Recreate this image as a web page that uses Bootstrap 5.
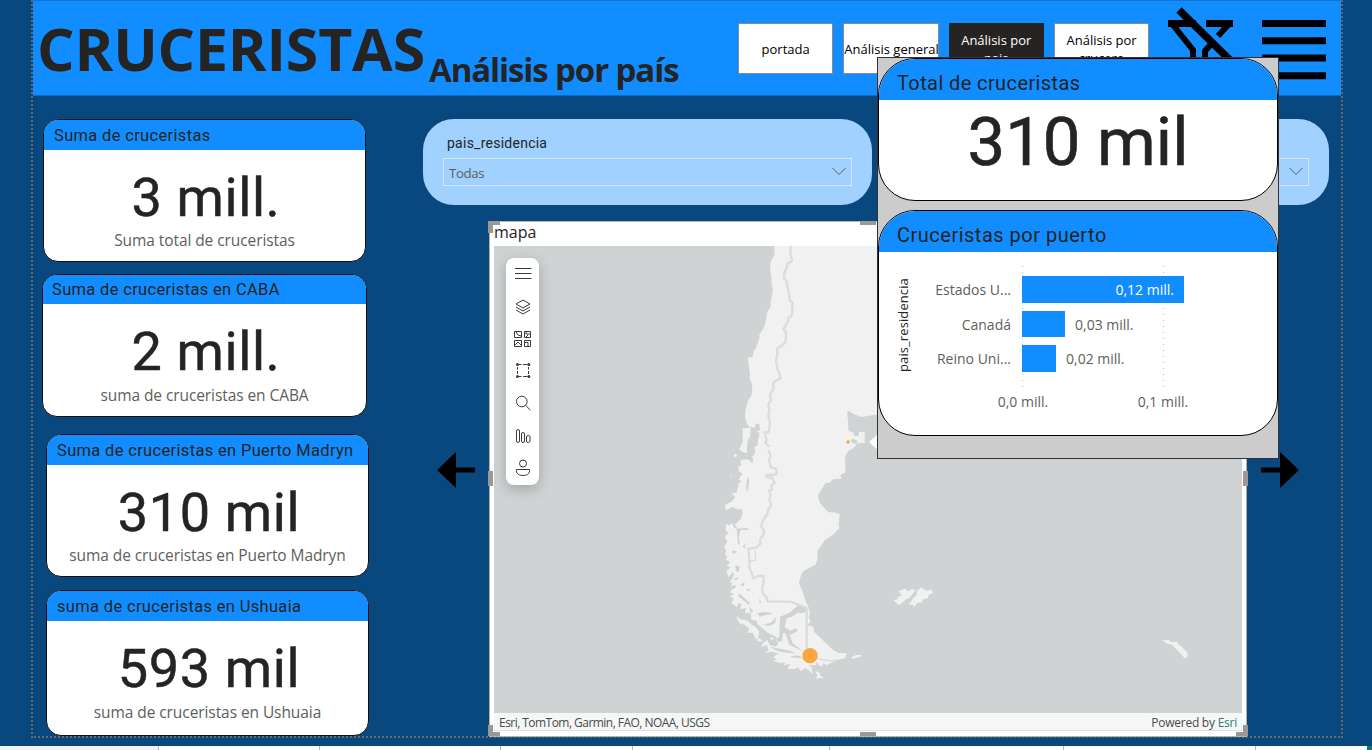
<!DOCTYPE html>
<html lang="es">
<head>
<meta charset="utf-8">
<meta name="viewport" content="width=device-width, initial-scale=1">
<title>Cruceristas - Análisis por país</title>
<link href="https://cdn.jsdelivr.net/npm/bootstrap@5.3.0/dist/css/bootstrap.min.css" rel="stylesheet">
<style>
body{width:1372px;height:750px;overflow:hidden;background:#09477f;font-family:"Open Sans","Noto Sans",sans-serif;color:#252423}
.din{font-family:Roboto,"Open Sans",sans-serif}
.stage{height:746px}
.report{width:1312px;height:738px;margin-left:31px;border:2px dotted #6a6664;border-top:0}
.topbar{height:96px;background:#118dff;border-top:1px solid #1173cf;border-bottom:1px solid #0d6ac0;padding-left:4px}
.h-main{width:392px;font-size:59px;font-weight:700;line-height:60px;margin-top:17px;letter-spacing:-.2px;white-space:nowrap}
.h-sub{width:250px;font-size:33px;font-weight:700;line-height:40px;margin-top:49px;letter-spacing:-1.1px;white-space:nowrap}
.navbtns{margin:22px 0 0 59px;gap:10px}
.pagebtn{width:95.3px;height:51px;background:#fff;border:1px solid #8a8a8a;border-radius:0;color:#000;font-size:13px;line-height:17.5px;padding:2px 0 0;overflow:hidden;white-space:nowrap}
.pagebtn.on{background:#252423;color:#fff;border-color:#252423}
.leftcol{width:390px}
.kpi{width:323px;height:143px;border:1px solid #111;border-radius:15px;overflow:hidden;background:#fff;text-align:center}
.kpi-h{background:#118dff;height:30px;padding-left:10px;font-size:16.5px;line-height:31px;letter-spacing:.33px;text-align:left}
.kpi-v{font-size:54px;line-height:60px;margin-top:18px;letter-spacing:.6px;padding-left:3px;-webkit-text-stroke:.5px #252423}
.kpi-l{font-size:15.5px;line-height:22px;color:#605e5c;letter-spacing:-.08px;margin-top:1px}
.c1{margin:23px 0 0 10px}
.c2{width:325px;margin:12px 0 0 9px}
.c2 .kpi-h{height:29px;line-height:29px;padding-left:9px}
.c2 .kpi-l,.c4 .kpi-l{margin-top:2px}
.c3{margin:17px 0 0 13px}
.c4{height:146px;margin:13px 0 0 13px}
.slicer{width:449px;height:86.6px;border-radius:31px;background:#a0d1ff;padding:14.300px 20px 0}
.sl-t{font-size:14px;line-height:20px;padding-left:4px;letter-spacing:.25px}
.sl-box{height:28px;margin-top:5px;border:1px solid #d5e6f6;padding:0 5px;font-size:13.3px;color:#605e5c;letter-spacing:-.4px}
.sl-box span{padding-top:4px}
.arrow-l{margin:0 14px}
.arrow-r{margin-left:14px}
.mapcard{width:758px;height:516px;background:#fff;border:1px solid #b3b0ad;padding:0 4px}
.map-t{height:24px;font-size:16px;line-height:21px}
.mapfoot{height:18px;background:#f5f7f6;border:1px solid #e0e2e2;border-width:0 0 1px;font-size:12px;line-height:20px;padding:0 5px;color:#4a4a4a}
.attr{letter-spacing:-.54px}
.pow{letter-spacing:-.24px}
.pow span{color:#2b7f73}
.hd{position:absolute;background:#999}
.tools{position:absolute;left:16px;top:36px;width:33px;height:227px;border-radius:8px;background:#fff;box-shadow:0 4px 14px rgba(0,0,0,.22)}
.tip{position:absolute;left:877px;top:57px;width:402px;height:402px;background:#ccc;border:1px solid #333}
.tip-arrow{position:absolute;left:869px;top:434px}
.tipcard{background:#fff;border:1px solid #000;border-radius:37px;overflow:hidden;width:400px}
.t1{height:143px}
.t2{height:226px;margin-top:9px}
.tip-h{height:41px;background:#118dff;font-size:20px;line-height:49px;padding-left:18px;letter-spacing:.5px}
.t1 .tip-h{line-height:48px;letter-spacing:.4px}
.tip-v{font-size:67px;line-height:76px;margin-top:4px;text-align:center;-webkit-text-stroke:.6px #252423}
.chart{position:relative;padding-top:24px;font-size:14px;line-height:27px;color:#605e5c}
.ylab{position:absolute;left:15px;top:24px;height:96px;writing-mode:vertical-rl;transform:rotate(180deg);font-size:13px;line-height:18px;letter-spacing:.1px;color:#252423}
.gl{position:absolute;top:14px;height:122px;width:1px;background:repeating-linear-gradient(#bbb 0 1px,transparent 1px 6px)}
.brow{height:26.5px;margin-bottom:8px}
.cat{width:132px;text-align:right;margin-right:11px}
.bar{height:26.5px;background:#118dff;position:relative}
.ax{position:absolute;top:136px;width:80px;text-align:center}
.tabs{height:4px;background:#fff}
.tabs i{border-right:1px solid #b8b8b8;height:4px}
</style>
</head>
<body>
<div class="stage">
<div class="report">
  <header class="topbar d-flex">
    <div class="h-main">CRUCERISTAS</div>
    <div class="h-sub">Análisis por país</div>
    <nav class="navbtns d-flex">
      <button class="pagebtn">portada</button>
      <button class="pagebtn">Análisis general</button>
      <button class="pagebtn on">Análisis por<br>pais</button>
      <button class="pagebtn">Análisis por<br>crucero</button>
    </nav>
    <svg class="ms-3" width="70" height="90" viewBox="1165 1 70 90" fill="none" stroke="#000">
      <path d="M1168 23.500H1196M1206 23.500H1233" stroke-width="7"/>
      <path d="M1173 25L1193 50V78M1228 25L1218 36" stroke-width="6"/>
      <path d="M1213 42L1205 51V72" stroke-width="6"/>
      <path d="M1179 10L1233 63" stroke-width="7.500"/>
    </svg>
    <svg style="margin-left:26px" width="66" height="90" viewBox="0 0 66 90" stroke="#000" stroke-width="7"><path d="M1 22.500H65M1 39.700H65M1 57H65M1 74.700H65"/></svg>
  </header>
  <main class="d-flex">
    <section class="leftcol">
      <div class="kpi c1"><div class="kpi-h din">Suma de cruceristas</div><div class="kpi-v din">3 mill.</div><div class="kpi-l">Suma total de cruceristas</div></div>
      <div class="kpi c2"><div class="kpi-h din">Suma de cruceristas en CABA</div><div class="kpi-v din">2 mill.</div><div class="kpi-l">suma de cruceristas en CABA</div></div>
      <div class="kpi c3"><div class="kpi-h din">Suma de cruceristas en Puerto Madryn</div><div class="kpi-v din">310 mil</div><div class="kpi-l">suma de cruceristas en Puerto Madryn</div></div>
      <div class="kpi c4"><div class="kpi-h din">suma de cruceristas en Ushuaia</div><div class="kpi-v din">593 mil</div><div class="kpi-l">suma de cruceristas en Ushuaia</div></div>
    </section>
    <section>
      <div class="d-flex" style="margin-top:22.700px;gap:8px">
        <div class="slicer"><div class="sl-t din">pais_residencia</div>
          <div class="sl-box d-flex justify-content-between align-items-center"><span>Todas</span><svg width="14" height="9" viewBox="0 0 14 9" fill="none" stroke="#605e5c"><path d="M.5 1L7 7.500L13.500 1"/></svg></div></div>
        <div class="slicer"><div class="sl-t">&nbsp;</div>
          <div class="sl-box d-flex justify-content-end align-items-center"><svg width="14" height="9" viewBox="0 0 14 9" fill="none" stroke="#605e5c"><path d="M.5 1L7 7.500L13.500 1"/></svg></div></div>
      </div>
      <div class="d-flex align-items-center" style="margin-top:15.700px">
        <svg class="arrow-l" style="margin-top:-17px" width="38" height="38" viewBox="0 0 38 38"><path d="M0 19L19 1V16.500H38V21.500H19V37Z"/></svg>
        <div class="mapcard position-relative">
          <div class="map-t">mapa</div>
          <svg class="d-block" width="748" height="467" viewBox="494 246 748 467">
            <rect x="494" y="246" width="748" height="467" fill="#cfd3d4"/>
            <g transform="translate(720 240) scale(.33333)" fill="#f1f1f1">
              <path d="M163 0V45L152 65L150 85L154 110L155 135L158 150L155 175L152 180V200L142 215L136 250L130 265L118 285L119 292L108 325L101 332L98 352L83 352L86 375L90 400L89 415L97 435L95 465L85 480L76 510L75 530L80 550L88 562L105 562L108 550L118 553L120 570L110 575L119 580L114 600L112 615L105 625L107 645L98 660L100 700H375L375 660L377 645L385 632L400 625L412 610L434 609V575L418 576L415 588L400 587L402 579L385 572L384 540L381 515L388 513L400 522L424 531L480 522V0Z"/>
              <path d="M68 565L92 563L90 590L83 600L80 638L57 630L68 605ZM42 642L50 644L48 650L42 648ZM62 660L78 658L82 665L74 680L62 672Z"/>
              <path d="M392 600L400 596L412 602L410 613L396 609Z" fill="#cfd3d4"/>
              <path d="M212 18L211 40L216 58L214 65L202 70L200 85L193 98L192 115L200 124L202 140L206 155L208 175L212 185L218 188L216 225L205 235L204 245L190 268L198 275L197 305L188 315L172 325V345L168 360L172 385L178 400L182 415L165 424L160 430L160 450L150 462L153 480L144 495L148 505L145 530L150 545L146 576L134 577L140 600L136 607L147 620L143 635L152 645L150 690" fill="none" stroke="#dbdcdb" stroke-width="7" stroke-linejoin="round"/>
            </g>
            <g transform="translate(710 450) scale(.33333)" fill="#f1f1f1">
              <path d="M132 -10L137 8L126 20L134 32L126 40L118 30L108 28L102 40L92 36L94 50L85 46L87 66L98 70L86 88L95 95L86 100L80 128L63 130L76 142L64 155L45 165L48 182L56 176L68 170L80 178L96 178L98 188L92 208L82 216L75 225L84 238L70 232L68 220L58 226L48 222L47 242L56 246L45 262L52 275L43 290L48 300L45 315L52 318L47 330L62 336L50 348L62 352L50 362L55 382L70 365L72 375L60 395L68 400L62 410L75 404L78 412L64 420L60 428L72 430L60 440L72 445L64 458L80 472L85 458L95 462L90 478L108 474L105 488L122 490L125 510L140 512L142 530L158 536L165 548L180 556L182 570L196 566L205 580L198 590L180 586L172 570L160 580L150 564L138 568L128 548L112 548L118 536L105 525L88 520L78 498L92 508L112 512L125 524L138 532L148 546L142 574L160 574L154 592L170 584L176 600L165 610L186 605L205 610L190 622L200 628L188 632L212 640L225 636L222 646L240 642L232 656L250 658L265 652L272 664L286 654L300 664L308 672L306 654L296 645L318 646L318 636L335 652L340 640L350 645L362 640L370 635L388 628L405 625L411 610L385 609L365 596L345 577L312 545L310 530L292 526L302 514L296 502L300 492L295 470L288 455L278 425L267 400L270 385L278 366L292 356L316 345L322 330L323 302L345 270L368 255L389 233L386 225L389 193L374 187L355 187L330 160L323 138L335 118L347 99L358 98L370 87L395 86L391 78L407 56L404 20L417 -3Z"/>
              <path d="M92 2L104 -2L112 4L108 10L98 6ZM72 14L80 13V20H73ZM60 75L65 76L63 81ZM424 622L438 615L456 615L450 620L428 626ZM314 664L328 666L330 676L343 685L330 684L318 686L322 674ZM550 450L564 448L562 440L575 438L566 424L585 416L594 424L606 418L616 420L606 434L598 444L588 448L578 458L566 466ZM596 464L608 448L622 432L620 424L634 412L648 422L666 420L668 430L656 434L654 444L640 448L634 458L622 458L612 472L608 464Z"/>
              <g fill="#cfd3d4">
                <path d="M142 490L160 486L186 488L184 492L170 494L150 500ZM200 500L195 520L178 528L160 524L182 518ZM210 500L240 488L262 468L280 468L294 478L278 490L262 488L246 500L230 504L224 530L240 542L258 535L264 542L240 555L248 580L270 596L278 602L254 592L238 584L226 550L219 548L216 574L204 575L198 566L208 560ZM148 444L154 458L148 460ZM80 236L110 234L118 240L92 240L86 262L90 284L84 282ZM98 290L104 280L106 296ZM112 80L118 92L112 128L108 110ZM88 430L120 460L116 464L84 438ZM76 346L90 350L84 368L78 362ZM104 395L100 410L92 404ZM140 520L170 546L200 562L196 568L164 552L138 528ZM178 590L210 596L240 602L256 610L230 608L204 604ZM236 620L262 616L280 624L262 624ZM110 415L124 420L112 424ZM118 470L130 482L122 490ZM66 300L82 306L70 312ZM68 388L88 380L80 390Z"/>
              </g>
              <g fill="none" stroke="#dbdcdb" stroke-width="7" stroke-linejoin="round">
                <path d="M175 0L182 18L177 30L183 52L198 56L201 72L190 75H168L172 82L186 84L194 98L184 108L186 118L177 122L182 135L178 148L184 165L174 180L172 192L160 210L153 230L162 240L160 255L150 268L152 280L140 292L115 297L118 320V352L125 368L130 385L145 378H160L161 400L157 412L158 430L168 440L173 455H242L270 466L290 474V595"/>
                <path d="M134 298L138 330L118 334" stroke-width="4"/><path d="M325 626L345 630L365 633L380 630" stroke-width="5"/>
              </g>
              <circle cx="300" cy="617" r="23" fill="#fca63f"/>
            </g>
            <circle cx="848" cy="442" r="1.800" fill="#fca63f"/>
            <path d="M1162.500 640H1169L1171 642H1177L1178 644L1182 647L1187 652L1188 656L1185 658.500L1181 654L1177 650L1172 645L1166 643Z" fill="#f1f1f1"/>
          </svg>
          <div class="mapfoot d-flex justify-content-between"><span class="attr">Esri, TomTom, Garmin, FAO, NOAA, USGS</span><span class="pow">Powered by <span>Esri</span></span></div>
          <i class="hd" style="left:-2px;top:-1px;width:12px;height:4px"></i><i class="hd" style="left:-2px;top:-1px;width:5px;height:12px"></i>
          <i class="hd" style="left:-2px;top:249px;width:5px;height:15px"></i><i class="hd" style="right:-2px;top:249px;width:5px;height:15px"></i>
          <i class="hd" style="left:370px;top:-1px;width:16px;height:4px"></i><i class="hd" style="left:370px;bottom:0;width:16px;height:4px"></i>
          <i class="hd" style="left:-2px;bottom:0;width:12px;height:4px"></i><i class="hd" style="left:-2px;bottom:0;width:5px;height:11px"></i>
          <i class="hd" style="right:-2px;bottom:0;width:12px;height:4px"></i><i class="hd" style="right:-2px;bottom:0;width:5px;height:11px"></i>
          <div class="tools">
            <svg class="d-block" width="33" height="227" viewBox="506 258 33 227" fill="none" stroke="#3a3a3a">
              <path d="M515 268.500H531.500M515 273.500H531.500M515 278.500H531.500"/>
              <path d="M523 300L530 304L523 308L516 304ZM516 307L523 311L530 307M516 310L523 314L530 310"/>
              <path d="M514.500 331.500H521.500V337.500H514.500ZM524.500 331.500H530.500V337.500H524.500ZM514.500 340.500H521.500V346.500H514.500ZM524.500 340.500H530.500V346.500H524.500ZM516 332L518 335L521 336M526 332V334H530M526 337L528 335M515 345L518 342L521 345M524 342.500H528V346"/>
              <path d="M519 364.500H521.500M523 364.500H527M519 376.500H521.500M523 376.500H527M517.500 367V369.500M517.500 371V374M528.500 367V369.500M528.500 371V374"/>
              <g fill="#3a3a3a" stroke="none"><circle cx="517.500" cy="364.500" r="1.500"/><circle cx="528.800" cy="364.500" r="1.500"/><circle cx="517.500" cy="376.500" r="1.500"/><circle cx="528.800" cy="376.500" r="1.500"/></g>
              <circle cx="521.800" cy="401.500" r="5.300"/><path d="M525.500 405.300L530.300 410"/>
              <rect x="516.500" y="429.500" width="3" height="13" rx="1.500"/><rect x="521.500" y="432.500" width="3" height="10" rx="1.500"/><rect x="526.500" y="435.500" width="3.500" height="7" rx="1.500"/>
              <circle cx="523" cy="463.500" r="3.500"/><path d="M516.500 469.500H529.500C530 473 528 475.500 523 475.500S516 473 516.500 469.500Z"/>
            </svg>
          </div>
        </div>
        <svg class="arrow-r" style="margin-top:-18px" width="38" height="38" viewBox="0 0 38 38"><path d="M38 19L19 1V16.500H0V21.500H19V37Z"/></svg>
      </div>
    </section>
  </main>
</div>
</div>
<div class="tabs d-flex">
  <i style="width:159px;background:#f3f2f1"></i><i style="width:161px"></i><i style="width:181px"></i><i style="width:132px"></i><i style="width:197px"></i><i style="width:234px"></i><i style="width:192px"></i><i class="ms-auto border-0" style="width:5px;background:#117865"></i>
</div>

<svg class="tip-arrow" width="9" height="16"><path d="M0 8L9 0V16Z" fill="#fff"/></svg>
<aside class="tip">
  <div class="tipcard t1"><div class="tip-h din">Total de cruceristas</div><div class="tip-v din">310 mil</div></div>
  <div class="tipcard t2"><div class="tip-h din">Cruceristas por puerto</div>
    <div class="chart">
      <div class="ylab">pais_residencia</div>
      <i class="gl" style="left:143px"></i><i class="gl" style="left:284px"></i>
      <div class="brow d-flex"><span class="cat">Estados U...</span><div class="bar text-white text-end" style="width:162px;padding-right:10px">0,12 mill.</div></div>
      <div class="brow d-flex"><span class="cat">Canadá</span><div class="bar" style="width:43px;margin-right:10px"></div>0,03 mill.</div>
      <div class="brow d-flex"><span class="cat">Reino Uni...</span><div class="bar" style="width:34px;margin-right:10px"></div>0,02 mill.</div>
      <span class="ax" style="left:104px">0,0 mill.</span><span class="ax" style="left:244px">0,1 mill.</span>
    </div>
  </div>
</aside>
<script src="https://cdn.jsdelivr.net/npm/bootstrap@5.3.0/dist/js/bootstrap.bundle.min.js"></script>
</body>
</html>
